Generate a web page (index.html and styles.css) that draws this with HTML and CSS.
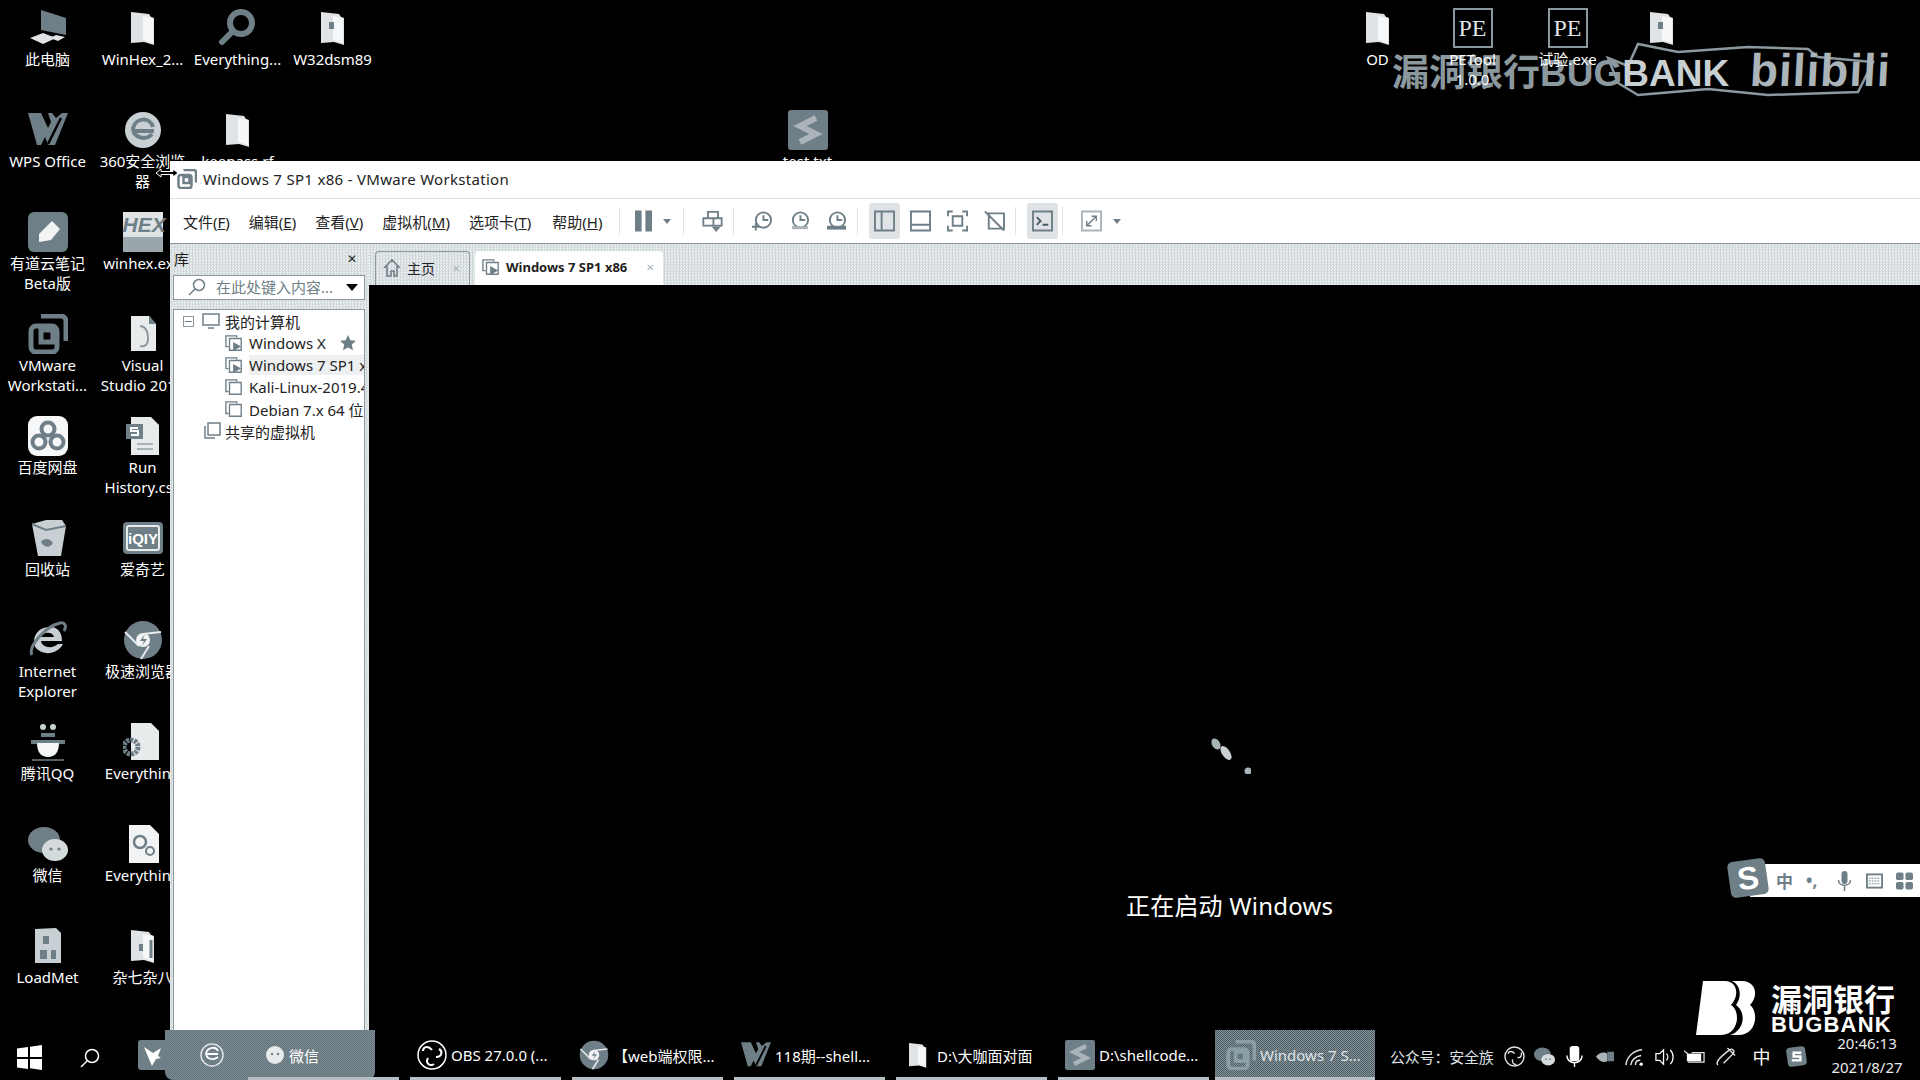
FILE: index.html
```html
<!DOCTYPE html>
<html lang="zh-CN">
<head>
    <meta charset="UTF-8">
    <title>Windows 7 SP1 x86 - VMware Workstation</title>
    <link rel="stylesheet" href="styles.css">
</head>
<body>
<svg class="defs" width="0" height="0">
    <defs>
        <symbol id="i-pc" viewBox="0 0 40 40"><path d="M13 2l25 8v17l-25-5z" fill="#6f7f87"/><path d="M2 30l13-5 13 5-13 6z" fill="#dfe3e5"/><path d="M28 27l9 2-7 4-8-3z" fill="#dfe3e5"/></symbol>
        <symbol id="i-folder" viewBox="0 0 40 40"><path d="M8 4l18 2 2 3 3 1v27l-10-3-13 1z" fill="#dfe3e5"/><path d="M20 8l10 2v25l-10-3z" fill="#f6f7f8"/></symbol>
        <symbol id="i-file" viewBox="0 0 40 40"><path d="M8 2h18l7 8v27H8z" fill="#e8ebec"/><path d="M26 2v8h7z" fill="#6f7f87"/><path d="M17 12c5 0 8 5 8 12s-3 9-8 8" fill="none" stroke="#8b989e" stroke-width="2"/></symbol>
        <symbol id="i-folder-dot" viewBox="0 0 40 40"><use href="#i-folder"/><rect x="16" y="14" width="5" height="7" fill="#6f7f87"/></symbol>
        <symbol id="i-search" viewBox="0 0 40 40"><circle cx="23" cy="15" r="11" fill="none" stroke="#6f7f87" stroke-width="6"/><path d="M14 24L4 34" stroke="#6f7f87" stroke-width="6" stroke-linecap="round"/></symbol>
        <symbol id="i-wps" viewBox="0 0 40 40"><path d="M0 3h13l7 15 3-6-3-9h4l4 5 6-5h6L27 35h-7l-3-8-4 8H9z" fill="#6f7f87"/><path d="M20 34L33 8" stroke="#000" stroke-width="2.500"/></symbol>
        <symbol id="i-360" viewBox="0 0 40 40"><circle cx="20" cy="20" r="18" fill="#c9d0d3"/><path d="M9 21h22M30 17c-3-10-17-10-20 1 0 10 13 13 19 6" stroke="#6f7f87" stroke-width="4" fill="none"/></symbol>
        <symbol id="i-note" viewBox="0 0 40 40"><rect width="40" height="40" rx="6" fill="#6f7f87"/><path d="M11 22L24 9l8 8-9 11-12 2z" fill="#f2f3f4"/></symbol>
        <symbol id="i-vmware" viewBox="0 0 40 40"><path d="M13 2h20a5 5 0 0 1 5 5v20" fill="none" stroke="#6f7f87" stroke-width="5"/><rect x="3" y="12" width="26" height="26" rx="5" fill="none" stroke="#6f7f87" stroke-width="5"/><rect x="13" y="16" width="12" height="12" fill="none" stroke="#6f7f87" stroke-width="5"/></symbol>
        <symbol id="i-sdoc" viewBox="0 0 40 40"><path d="M8 1h20l8 8v30H8z" fill="#e8ebec"/><rect x="3" y="8" width="17" height="15" fill="#6f7f87"/><path d="M15 12H8v3h7v4H8" stroke="#fff" stroke-width="2" fill="none"/><path d="M14 28h16M14 33h16" stroke="#a9b4b9" stroke-width="2"/></symbol>
        <symbol id="i-baidu" viewBox="0 0 40 40"><rect width="40" height="40" rx="9" fill="#f6f7f8"/><circle cx="20" cy="13" r="6.500" fill="none" stroke="#6f7f87" stroke-width="4"/><circle cx="11" cy="26" r="6.500" fill="none" stroke="#6f7f87" stroke-width="4"/><circle cx="29" cy="26" r="6.500" fill="none" stroke="#6f7f87" stroke-width="4"/></symbol>
        <symbol id="i-bin" viewBox="0 0 40 40"><path d="M4 6l14-4 16 0 4 6-5 30H10z" fill="#c9d0d3"/><path d="M4 6l14 6 20-4" fill="none" stroke="#6f7f87" stroke-width="2"/><path d="M13 24c4-5 9-3 12 1-3 5-9 5-12-1z" fill="#6f7f87"/></symbol>
        <symbol id="i-iqiyi" viewBox="0 0 40 40"><rect width="40" height="32" y="4" rx="4" fill="#6f7f87"/><rect x="4" y="8" width="32" height="24" rx="2" fill="none" stroke="#e8ebec" stroke-width="2"/><text x="20" y="26" text-anchor="middle" font-family="Liberation Sans" font-size="15" font-weight="700" fill="#fff">iQIY</text></symbol>
        <symbol id="i-ie" viewBox="0 0 40 40"><path d="M6 22c0-10 8-16 18-15 7 1 10 7 10 14H13c1 7 12 8 17 3h5c-4 8-14 11-21 8-5-2-8-5-8-10zm7-5h13c-1-5-11-6-13 0z" fill="#c9d0d3" fill-rule="evenodd"/><path d="M4 35c-4-8 12-28 28-32 5-1 7 3 4 8" fill="none" stroke="#6f7f87" stroke-width="3"/></symbol>
        <symbol id="i-chrome" viewBox="0 0 40 40"><circle cx="20" cy="20" r="19" fill="#6f7f87"/><path d="M2 12l14 14M20 14l18-2M26 26l-8 13" stroke="#e8ebec" stroke-width="2"/><circle cx="20" cy="20" r="7" fill="#f2f3f4"/><path d="M22 14l-5 7h4l-2 5 5-7h-4z" fill="#6f7f87"/></symbol>
        <symbol id="i-qq" viewBox="0 0 40 40"><circle cx="15" cy="5" r="3" fill="#c9d0d3"/><circle cx="25" cy="5" r="3" fill="#c9d0d3"/><path d="M13 13h14M3 20h34" stroke="#6f7f87" stroke-width="4"/><path d="M9 21h22c0 9-4 14-11 14S9 30 9 21z" fill="#f6f7f8"/><path d="M4 38h32" stroke="#6f7f87" stroke-width="1.500"/></symbol>
        <symbol id="i-gearfile" viewBox="0 0 40 40"><path d="M8 1h20l8 8v29H8z" fill="#e8ebec"/><circle cx="8" cy="25" r="7" fill="none" stroke="#6f7f87" stroke-width="5" stroke-dasharray="3 1"/></symbol>
        <symbol id="i-gearfile2" viewBox="0 0 40 40"><path d="M6 1h21l9 9v29H6z" fill="#f2f3f4"/><circle cx="17" cy="18" r="6" fill="none" stroke="#6f7f87" stroke-width="2.500"/><circle cx="27" cy="27" r="4" fill="none" stroke="#6f7f87" stroke-width="2"/></symbol>
        <symbol id="i-wechat" viewBox="0 0 40 40"><ellipse cx="16" cy="16" rx="16" ry="13" fill="#6f7f87"/><ellipse cx="27" cy="26" rx="13" ry="11" fill="#d5dadd"/><circle cx="23" cy="25" r="1.600" fill="#6f7f87"/><circle cx="31" cy="25" r="1.600" fill="#6f7f87"/></symbol>
        <symbol id="i-load" viewBox="0 0 40 40"><path d="M7 3l21-1 5 5v30H7z" fill="#c9d0d3"/><path d="M15 10h6v8h-6zM12 24h7v9h-7zM23 24h5v9h-5z" fill="#6f7f87"/></symbol>
        <symbol id="i-folder-bar" viewBox="0 0 40 40"><use href="#i-folder"/><path d="M28 14v18" stroke="#6f7f87" stroke-width="3"/><rect x="16" y="18" width="4" height="7" fill="#6f7f87"/></symbol>
        <symbol id="i-sublime" viewBox="0 0 40 40"><rect width="40" height="40" rx="3" fill="#6f7f87"/><path d="M28 8L12 16l16 8-16 8" fill="none" stroke="#aab4b9" stroke-width="6"/></symbol>
        <symbol id="i-vm-on" viewBox="0 0 20 20"><path d="M4 14H1V2h12v2" fill="none" stroke="#6f7f87" stroke-width="1.500"/><path d="M5 5h13v13H5z" fill="none" stroke="#6f7f87" stroke-width="1.500"/><path d="M9 9l9 5-9 5z" fill="#6f7f87"/></symbol>
        <symbol id="i-vm-off" viewBox="0 0 20 20"><path d="M4 15H1V2h12v2" fill="none" stroke="#6f7f87" stroke-width="1.500"/><path d="M5 5h13v13H5z" fill="none" stroke="#6f7f87" stroke-width="1.500"/></symbol>
        <symbol id="i-clock" viewBox="0 0 22 22"><circle cx="12" cy="10" r="8" fill="none" stroke="#6f7f87" stroke-width="2"/><path d="M12 5v5h5" fill="none" stroke="#6f7f87" stroke-width="2"/></symbol>
    </defs>
</svg>

<div class="mark-top">
    <svg class="mark-frame" viewBox="0 0 285 65"><path d="M5 20l20 8 10-22 40 8 70-5 60 2 10 8 55 5-15 30-90 3-60-6-70 6-20-12z" fill="none" stroke="#8b989e" stroke-width="2.500"/></svg>
    <span class="mark-name">漏洞银行BUG<em>BANK</em></span>
    <span class="mark-bili">bilibili</span>
</div>

<div class="desktop">
    <div class="desk-item c1"><svg class="desk-icon"><use href="#i-pc"/></svg><span>此电脑</span></div>
    <div class="desk-item c1"><svg class="desk-icon"><use href="#i-wps"/></svg><span>WPS Office</span></div>
    <div class="desk-item c1"><svg class="desk-icon"><use href="#i-note"/></svg><span>有道云笔记 Beta版</span></div>
    <div class="desk-item c1"><svg class="desk-icon"><use href="#i-vmware"/></svg><span>VMware Workstati...</span></div>
    <div class="desk-item c1"><svg class="desk-icon"><use href="#i-baidu"/></svg><span>百度网盘</span></div>
    <div class="desk-item c1"><svg class="desk-icon"><use href="#i-bin"/></svg><span>回收站</span></div>
    <div class="desk-item c1"><svg class="desk-icon"><use href="#i-ie"/></svg><span>Internet Explorer</span></div>
    <div class="desk-item c1"><svg class="desk-icon"><use href="#i-qq"/></svg><span>腾讯QQ</span></div>
    <div class="desk-item c1"><svg class="desk-icon"><use href="#i-wechat"/></svg><span>微信</span></div>
    <div class="desk-item c1"><svg class="desk-icon"><use href="#i-load"/></svg><span>LoadMet</span></div>

    <div class="desk-item c2"><svg class="desk-icon"><use href="#i-folder"/></svg><span>WinHex_2...</span></div>
    <div class="desk-item c2"><svg class="desk-icon"><use href="#i-360"/></svg><span>360安全浏览器</span></div>
    <div class="desk-item c2"><div class="hex-icon">HEX</div><span>winhex.exe</span></div>
    <div class="desk-item c2"><svg class="desk-icon"><use href="#i-file"/></svg><span>Visual<br>Studio 2019</span></div>
    <div class="desk-item c2"><svg class="desk-icon"><use href="#i-sdoc"/></svg><span>Run History.csv</span></div>
    <div class="desk-item c2"><svg class="desk-icon"><use href="#i-iqiyi"/></svg><span>爱奇艺</span></div>
    <div class="desk-item c2"><svg class="desk-icon"><use href="#i-chrome"/></svg><span>极速浏览器</span></div>
    <div class="desk-item c2"><svg class="desk-icon"><use href="#i-gearfile"/></svg><span>Everything</span></div>
    <div class="desk-item c2"><svg class="desk-icon"><use href="#i-gearfile2"/></svg><span>Everything</span></div>
    <div class="desk-item c2"><svg class="desk-icon"><use href="#i-folder-bar"/></svg><span>杂七杂八</span></div>

    <div class="desk-item c3"><svg class="desk-icon"><use href="#i-search"/></svg><span>Everything...</span></div>
    <div class="desk-item c3"><svg class="desk-icon"><use href="#i-folder"/></svg><span>keepass.rf</span></div>
    <div class="desk-item c4"><svg class="desk-icon"><use href="#i-folder-dot"/></svg><span>W32dsm89</span></div>
    <div class="desk-item c9"><svg class="desk-icon"><use href="#i-sublime"/></svg><span>test.txt</span></div>
    <div class="desk-item c15"><svg class="desk-icon"><use href="#i-folder"/></svg><span>OD</span></div>
    <div class="desk-item c16"><div class="pe-icon">PE</div><span>PETool<br>1.0.0</span></div>
    <div class="desk-item c17"><div class="pe-icon">PE</div><span>试验.exe</span></div>
    <div class="desk-item c18"><svg class="desk-icon"><use href="#i-folder-dot"/></svg></div>
</div>

<div class="window">
    <div class="titlebar">
        <svg class="title-icon"><use href="#i-vmware"/></svg>
        <span>Windows 7 SP1 x86 - VMware Workstation</span>
    </div>
    <div class="menubar">
        <nav class="menu">
            <span>文件(<u>F</u>)</span>
            <span>编辑(<u>E</u>)</span>
            <span>查看(<u>V</u>)</span>
            <span>虚拟机(<u>M</u>)</span>
            <span>选项卡(<u>T</u>)</span>
            <span>帮助(<u>H</u>)</span>
        </nav>
        <div class="toolbar">
            <i class="sep"></i>
            <svg class="tool tool-pause" viewBox="0 0 18 22"><path d="M0 0h7v22H0zM11 0h7v22h-7z" fill="#6f7f87"/></svg>
            <i class="caret"></i>
            <i class="sep"></i>
            <svg class="tool" viewBox="0 0 22 24"><path d="M6 2h11v7H6zM1 9h20v8H1zM12 9v8" fill="none" stroke="#6f7f87" stroke-width="2"/><path d="M10 18h10l-5 6z" fill="#6f7f87"/></svg>
            <i class="sep"></i>
            <svg class="tool" viewBox="0 0 22 22"><use href="#i-clock"/><path d="M4 13v8M0 17h8" stroke="#6f7f87" stroke-width="2"/></svg>
            <svg class="tool" viewBox="0 0 22 22"><use href="#i-clock"/><path d="M3 18h17" stroke="#aab4b9" stroke-width="3"/></svg>
            <svg class="tool" viewBox="0 0 22 22"><use href="#i-clock"/><path d="M1 18h20" stroke="#6f7f87" stroke-width="4"/></svg>
            <i class="sep"></i>
            <span class="tool-on"><svg class="tool" viewBox="0 0 22 22"><path d="M1 1h20v20H1zM8 1v20" fill="none" stroke="#6f7f87" stroke-width="2"/></svg></span>
            <svg class="tool" viewBox="0 0 22 22"><path d="M1 1h20v20H1zM1 15h20" fill="none" stroke="#6f7f87" stroke-width="2"/></svg>
            <svg class="tool" viewBox="0 0 22 22"><path d="M1 6V1h5M16 1h5v5M21 16v5h-5M6 21H1v-5M6 6h10v10H6z" fill="none" stroke="#6f7f87" stroke-width="2"/></svg>
            <svg class="tool" viewBox="0 0 22 22"><path d="M5 3h16v16H5zM1 1l20 20" fill="none" stroke="#6f7f87" stroke-width="2"/></svg>
            <i class="sep"></i>
            <span class="tool-on"><svg class="tool" viewBox="0 0 22 22"><path d="M1 1h20v20H1z" fill="none" stroke="#6f7f87" stroke-width="2"/><path d="M5 7l4 4-4 4M11 15h6" fill="none" stroke="#4b5a62" stroke-width="2"/></svg></span>
            <i class="sep"></i>
            <svg class="tool" viewBox="0 0 22 22"><path d="M1 1h20v20H1z" fill="none" stroke="#aab4b9" stroke-width="2"/><path d="M6 16L16 6M11 6h5v5M6 11v5h5" fill="none" stroke="#6f7f87" stroke-width="1.500"/></svg>
            <i class="caret"></i>
        </div>
    </div>
    <div class="workspace">
        <aside class="library">
            <div class="library-head"><span>库</span><span class="library-close">✕</span></div>
            <div class="library-search">
                <svg class="search-glass" viewBox="0 0 18 18"><circle cx="11" cy="7" r="5.500" fill="none" stroke="#6f7f87" stroke-width="1.500"/><path d="M7 11l-6 6" stroke="#6f7f87" stroke-width="1.500"/></svg>
                <span class="search-text">在此处键入内容...</span>
                <i class="search-caret"></i>
            </div>
            <div class="tree">
                <div class="tree-row root">
                    <i class="tree-toggle"></i>
                    <svg class="tree-icon" viewBox="0 0 18 18"><path d="M1 2h16v11H1zM6 16h6" fill="none" stroke="#6f7f87" stroke-width="1.500"/></svg>
                    <span>我的计算机</span>
                </div>
                <div class="tree-row vm"><svg class="tree-icon"><use href="#i-vm-on"/></svg><span>Windows X</span><svg class="tree-star" viewBox="0 0 16 16"><path d="M8 0l2.400 5.200 5.600.6-4.200 3.800 1.200 5.600L8 12.400l-5 2.800 1.200-5.600L0 5.800l5.600-.6z" fill="#6f7f87"/></svg></div>
                <div class="tree-row vm current"><svg class="tree-icon"><use href="#i-vm-on"/></svg><span>Windows 7 SP1 x86</span></div>
                <div class="tree-row vm"><svg class="tree-icon"><use href="#i-vm-off"/></svg><span>Kali-Linux-2019.4</span></div>
                <div class="tree-row vm"><svg class="tree-icon"><use href="#i-vm-off"/></svg><span>Debian 7.x 64 位</span></div>
                <div class="tree-row shared">
                    <svg class="tree-icon" viewBox="0 0 18 18"><path d="M4 1h12v12H4zM1 4v12h10" fill="none" stroke="#6f7f87" stroke-width="1.500"/></svg>
                    <span>共享的虚拟机</span>
                </div>
            </div>
        </aside>
        <main class="main">
            <div class="tabs">
                <div class="tab tab-home">
                    <svg class="tab-icon" viewBox="0 0 18 18"><path d="M1 9l8-8 8 8M4 7v10h4v-5h3v5h3V7" fill="none" stroke="#6f7f87" stroke-width="1.600"/></svg>
                    <span>主页</span><span class="tab-close">✕</span>
                </div>
                <div class="tab tab-active">
                    <svg class="tab-icon"><use href="#i-vm-on"/></svg>
                    <span>Windows 7 SP1 x86</span><span class="tab-close">✕</span>
                </div>
            </div>
            <div class="screen">
                <svg class="spinner" viewBox="0 0 40 36"><ellipse cx="5" cy="6" rx="4" ry="6" transform="rotate(-30 5 6)" fill="#a9b4b9"/><ellipse cx="15" cy="15" rx="4" ry="8" transform="rotate(-35 15 15)" fill="#c9d0d3"/><circle cx="37" cy="33" r="3.500" fill="#a9b4b9"/></svg>
                <div class="boot-text">正在启动 Windows</div>
            </div>
        </main>
    </div>
</div>

<svg class="resize-cursor" viewBox="0 0 24 10"><path d="M1 5l5-4v2.500h12V1l5 4-5 4V6.500H6V9z" fill="#000" stroke="#fff"/></svg>

<div class="ime">
    <span class="ime-logo">S</span>
    <span>中</span><span class="ime-comma">•,</span>
    <svg class="ime-icon" viewBox="0 0 14 20"><rect x="4" width="6" height="13" rx="3" fill="#6f7f87"/><path d="M1 9c0 7 12 7 12 0M7 15v5" fill="none" stroke="#6f7f87" stroke-width="1.500"/></svg>
    <svg class="ime-icon" viewBox="0 0 18 18"><rect x="1" y="2" width="16" height="14" fill="none" stroke="#6f7f87" stroke-width="2"/><path d="M3 6h12M3 9h12M3 12h12" stroke="#6f7f87" stroke-dasharray="2 1"/></svg>
    <svg class="ime-icon" viewBox="0 0 18 18"><rect width="8" height="8" rx="2" fill="#6f7f87"/><rect x="10" width="8" height="8" rx="2" fill="#6f7f87"/><rect y="10" width="8" height="8" rx="2" fill="#6f7f87"/><rect x="10" y="10" width="8" height="8" rx="2" fill="#6f7f87"/></svg>
</div>

<div class="taskbar">
    <span class="hover-glow"></span>
    <div class="task-cell"><svg class="win-logo" viewBox="0 0 25 25"><path d="M0 3.500L11 2v10H0zM13 1.700L25 0v12H13zM0 14h11v10L0 22.500zM13 14h12v11l-12-1.700z" fill="#fff"/></svg></div>
    <div class="task-cell"><svg class="task-glass" viewBox="0 0 20 20"><circle cx="12" cy="8" r="6.500" fill="none" stroke="#fff" stroke-width="1.500"/><path d="M7 13l-6 6" stroke="#fff" stroke-width="1.500"/></svg></div>
    <div class="task-pin"><svg viewBox="0 0 30 30"><rect width="30" height="30" rx="3" fill="#6f7f87"/><path d="M6 7l9 6 8-5-3 8 3 2-5 1-4 7-3-7z" fill="#fff"/></svg></div>
    <div class="task-pin2"><svg viewBox="0 0 26 26"><circle cx="13" cy="13" r="11" fill="none" stroke="#dfe3e5" stroke-width="1.500"/><path d="M7 12h12M19 9c-2-5-10-4-12 2 0 6 7 8 12 4" fill="none" stroke="#fff" stroke-width="1.800"/></svg></div>
    <div class="task task-first"><svg class="task-icon small" viewBox="0 0 20 20"><circle cx="10" cy="10" r="9" fill="#e8ebec"/><circle cx="7" cy="9" r="1.200" fill="#6f7f87"/><circle cx="13" cy="9" r="1.200" fill="#6f7f87"/></svg><span>微信</span></div>
    <div class="task"><svg class="task-icon" viewBox="0 0 30 30"><circle cx="15" cy="15" r="14" fill="none" stroke="#fff" stroke-width="1.500"/><path d="M15 10c-4-5-9-3-9 1M11 18c-3 5 2 9 6 6M19 17c6 0 7-6 3-8" fill="none" stroke="#fff" stroke-width="2"/></svg><span>OBS 27.0.0 (...</span></div>
    <div class="task"><svg class="task-icon" viewBox="0 0 30 30"><use href="#i-chrome"/></svg><span>【web端权限...</span></div>
    <div class="task"><svg class="task-icon" viewBox="0 0 30 30"><use href="#i-wps"/></svg><span>118期--shell...</span></div>
    <div class="task"><svg class="task-icon" viewBox="0 0 30 30"><use href="#i-folder"/></svg><span>D:\大咖面对面</span></div>
    <div class="task"><svg class="task-icon" viewBox="0 0 30 30"><use href="#i-sublime"/></svg><span>D:\shellcode...</span></div>
    <div class="task task-current"><svg class="task-icon" viewBox="0 0 30 30"><use href="#i-vmware"/></svg><span>Windows 7 S...</span></div>
    <div class="tray">
        <span class="tray-label">公众号：安全族</span>
        <span class="tray-cell"><svg viewBox="0 0 22 22"><circle cx="11" cy="11" r="10" fill="none" stroke="#dfe3e5" stroke-width="1.500"/><path d="M11 8c-3-4-6-2-7 0M9 14c-1 4 2 6 4 5M14 12c4 1 5-3 4-5" fill="none" stroke="#dfe3e5" stroke-width="1.500"/></svg></span>
        <span class="tray-cell"><svg viewBox="0 0 22 22"><use href="#i-wechat"/></svg></span>
        <span class="tray-cell"><svg viewBox="0 0 22 22"><rect x="6" width="10" height="16" rx="3" fill="#fff"/><path d="M3 10c0 10 16 10 16 0M11 18v4" fill="none" stroke="#fff" stroke-width="1.500"/></svg></span>
        <span class="tray-cell"><svg viewBox="0 0 22 22"><path d="M2 11c4-5 9-5 12-3v8c-4 2-9 0-12-5z" fill="#a9b4b9"/><rect x="14" y="6" width="7" height="10" fill="#6f7f87"/></svg></span>
        <span class="tray-cell"><svg viewBox="0 0 22 22"><path d="M2 20C3 11 10 5 19 4M7 20c1-5 5-9 11-10M12 20c0-3 2-5 5-5" fill="none" stroke="#dfe3e5" stroke-width="1.500"/><circle cx="18" cy="19" r="1.800" fill="#fff"/></svg></span>
        <span class="tray-cell"><svg viewBox="0 0 22 22"><path d="M2 8h4l4-4v15l-4-4H2z" fill="none" stroke="#fff" stroke-width="1.300"/><path d="M13 8c2 2 2 5 0 7M17 4c4 4 4 11 0 15" fill="none" stroke="#fff" stroke-width="1.300"/></svg></span>
        <span class="tray-cell"><svg viewBox="0 0 22 22"><path d="M0 5l4 3M8 7h13v10H4" fill="none" stroke="#dfe3e5" stroke-width="1.300"/><rect x="3" y="8" width="15" height="8" fill="#fff"/></svg></span>
        <span class="tray-cell wide"><svg viewBox="0 0 22 22"><path d="M2 20c-3-3 2-8 12-16 3-2 6 1 4 4L8 18M12 2l8 8" fill="none" stroke="#dfe3e5" stroke-width="1.500"/></svg></span>
        <span class="tray-cell wide tray-lang">中</span>
        <span class="tray-cell wide"><svg viewBox="0 0 22 22"><rect x="1" y="1" width="20" height="20" rx="4" transform="rotate(-8 11 11)" fill="#6f7f87"/><path d="M16 7H8v4h7v4H6" fill="none" stroke="#fff" stroke-width="2.500"/></svg></span>
        <div class="clock"><span>20:46:13</span><span>2021/8/27</span></div>
    </div>
</div>

<div class="mark-corner">
    <svg class="mark-b" viewBox="0 0 62 54"><path d="M7 0h22c12 0 15 14 6 24 10 6 8 30-10 30H0z" fill="#fff"/><path d="M36 0h10c14 0 17 15 8 24 9 7 7 30-12 30h-8c14-4 17-22 6-30 6-8 5-20-4-24z" fill="#fff"/></svg>
    <div class="mark-text"><strong>漏洞银行</strong><b>BUGBANK</b></div>
</div>
</body>
</html>
```

FILE: styles.css
```css
* { box-sizing: border-box; }
html, body { margin: 0; height: 100%; }
body {
    position: relative;
    width: 1920px;
    height: 1080px;
    overflow: hidden;
    background: #000;
    color: #fff;
    font-family: "Noto Sans", "Noto Sans CJK SC", sans-serif;
    font-size: 14px;
}
.defs { position: absolute; }

/* desktop */
.desktop {
    position: relative;
    display: grid;
    grid-template-columns: repeat(20, 95px);
    grid-template-rows: repeat(10, 102px);
    grid-auto-flow: column;
    padding-top: 8px;
}
.desk-item {
    display: flex;
    flex-direction: column;
    align-items: center;
    text-align: center;
    font-size: 15px;
    line-height: 20px;
    padding: 0 1px;
}
.desk-item span { margin-top: 1px; }
.desk-icon, .hex-icon, .pe-icon { width: 40px; height: 40px; flex: none; }
.c1 { grid-column: 1; }
.c2 { grid-column: 2; }
.c3 { grid-column: 3; }
.c4 { grid-column: 4; }
.c9 { grid-column: 9; grid-row: 2; }
.c15 { grid-column: 15; }
.c16 { grid-column: 16; }
.c17 { grid-column: 17; }
.c18 { grid-column: 18; margin-left: -2px; }
.hex-icon {
    background: linear-gradient(#dfe3e5 0 62%, #9aa6ab 62%);
    color: #6f7f87;
    font: italic bold 21px/26px "Liberation Sans", sans-serif;
    text-align: center;
}
.pe-icon {
    border: 2px solid #8b989e;
    color: #dfe3e5;
    font: 24px/36px "Liberation Serif", serif;
}

/* window */
.window {
    position: absolute;
    left: 170px;
    top: 161px;
    right: 0;
    bottom: 50px;
    display: flex;
    flex-direction: column;
    background: #fff;
    color: #222;
}
.titlebar {
    display: flex;
    align-items: center;
    gap: 6px;
    height: 38px;
    padding: 0 0 2px 7px;
    border-bottom: 1px solid #dfe3e5;
    font-size: 15px;
    letter-spacing: 0.3px;
    flex: none;
}
.title-icon { width: 20px; height: 20px; }
.menubar {
    display: flex;
    align-items: center;
    height: 45px;
    flex: none;
    border-bottom: 1px solid #8b989e;
}
.menu { display: flex; gap: 19px; padding-left: 13px; font-size: 15px; width: 448px; flex: none; }
.menu span:last-child { margin-left: 2px; }
.toolbar { display: flex; align-items: center; margin-left: -1px; }
.sep { width: 1px; height: 28px; margin: 0 2px; background: #dfe3e5; }
.tool { width: 21px; height: 22px; margin: 0 8px; flex: none; }
.tool-pause { margin: 0 8px 0 13px; width: 17px; }
.caret {
    width: 0;
    height: 0;
    margin: 0 10px 0 3px;
    border: 4px solid transparent;
    border-top: 5px solid #6f7f87;
    border-bottom: 0;
}
.tool-on {
    display: flex;
    align-items: center;
    height: 36px;
    margin: 0 2px 0 9px;
    background: #dfe3e5;
    border-radius: 3px;
}
.tool-on .tool { margin: 0 5px; }
.toolbar > .sep + .tool { margin-left: 16px; }
.toolbar > .sep + .tool-pause { margin-left: 13px; }
.workspace {
    flex: 1;
    display: flex;
    min-height: 0;
}

/* dotted grey of the panels */
.library, .tabs {
    background: repeating-conic-gradient(#cfd6d9 0 25%, #eceff0 0 50%) 0 0 / 3px 3px;
}
.library { width: 199px; padding: 0 4px 0 3px; flex: none; display: flex; flex-direction: column; }
.library-head {
    display: flex;
    justify-content: space-between;
    align-items: center;
    height: 31px;
    padding: 0 8px 3px 1px;
    font-size: 15px;
}
.library-close { font-size: 12px; }
.library-search {
    display: flex;
    align-items: center;
    height: 25px;
    background: #fff;
    border: 1px solid #8b989e;
    padding: 0 0 1px 14px;
}
.search-glass { width: 18px; height: 18px; }
.search-text { margin-left: 10px; font-size: 15px; line-height: 20px; color: #6f7f87; flex: 1; white-space: nowrap; }
.search-caret {
    width: 0;
    height: 0;
    margin-right: 6px;
    border: 6px solid transparent;
    border-top: 7px solid #000;
    border-bottom: 0;
}
.tree {
    flex: 1;
    margin-top: 9px;
    background: #fff;
    border: 1px solid #8b989e;
    border-bottom: 0;
    overflow: hidden;
    font-size: 15px;
}
.tree-row {
    position: relative;
    display: flex;
    align-items: center;
    height: 22px;
    white-space: nowrap;
}
.tree-row.root { padding-left: 9px; }
.tree-toggle {
    width: 11px;
    height: 11px;
    border: 1px solid #8b989e;
    background: linear-gradient(#6f7f87, #6f7f87) center / 7px 1px no-repeat;
}
.tree-icon { width: 18px; height: 18px; flex: none; }
.root .tree-icon { margin: 0 5px 0 8px; }
.vm { padding-left: 51px; }
.vm .tree-icon { margin-right: 6px; }
.current span { background: #eef0f1; flex: 1; }
.shared { padding-left: 30px; }
.shared .tree-icon { margin-right: 3px; }
.tree-star { position: absolute; left: 166px; width: 16px; height: 16px; }

.main { flex: 1; display: flex; flex-direction: column; min-width: 0; }
.tabs {
    display: flex;
    align-items: flex-end;
    gap: 5px;
    height: 41px;
    padding-left: 6px;
    flex: none;
}
.tab {
    display: flex;
    align-items: center;
    height: 34px;
    padding-bottom: 2px;
    font-size: 13px;
    border-radius: 4px 4px 0 0;
    position: relative;
}
.tab-home { width: 95px; padding-left: 7px; gap: 6px; border: 1px solid #8b989e; border-bottom: 0; font-size: 14px; }
.tab-active { width: 188px; padding-left: 7px; gap: 6px; background: #fff; font-weight: 700; }
.tab-icon { width: 18px; height: 18px; flex: none; }
.tab-close { position: absolute; right: 9px; font-size: 10px; font-weight: 400; color: #aab4b9; }
.screen {
    flex: 1;
    position: relative;
    background: #000;
    color: #fff;
}
.spinner { position: absolute; left: 842px; top: 453px; width: 40px; height: 36px; }
.boot-text {
    position: absolute;
    left: 757px;
    top: 605px;
    font-size: 24px;
    line-height: 32px;
    letter-spacing: 0.2px;
    white-space: nowrap;
}
.resize-cursor { position: absolute; left: 155px; top: 168px; width: 24px; height: 10px; }

/* input method bar */
.ime {
    position: absolute;
    right: 0;
    top: 864px;
    width: 170px;
    height: 33px;
    padding-left: 26px;
    display: flex;
    align-items: center;
    gap: 13px;
    background: #fff;
    color: #6f7f87;
    font-weight: 700;
    font-size: 17px;
}
.ime-comma { width: 17px; }
.ime-logo {
    position: absolute;
    left: -21px;
    top: -4px;
    width: 38px;
    height: 36px;
    background: #6f7f87;
    border-radius: 5px;
    transform: rotate(-8deg);
    color: #fff;
    font: bold 32px/36px "Liberation Sans", sans-serif;
    text-align: center;
}
.ime-icon { width: 17px; height: 20px; flex: none; }

/* watermarks, painted under the desktop icons */
.mark-top { position: absolute; z-index: -1; left: 1392px; top: 38px; width: 500px; height: 70px; }
.mark-name {
    position: absolute;
    left: 0;
    top: 11px;
    color: #8b989e;
    font: 700 37px/50px "Liberation Sans", "Noto Sans CJK SC", sans-serif;
    white-space: nowrap;
}
.mark-name em { font-style: normal; color: #c9d0d3; }
.mark-frame { position: absolute; left: 211px; top: 0; width: 285px; height: 65px; }
.mark-bili {
    position: absolute;
    left: 358px;
    top: 4px;
    color: #aab4b9;
    font: 700 46px/56px "Liberation Sans", sans-serif;
    letter-spacing: 1px;
    transform: skewX(-3deg);
}
.mark-corner {
    position: absolute;
    left: 1696px;
    top: 981px;
    display: flex;
    gap: 13px;
}
.mark-b { width: 62px; height: 54px; }
.mark-text { display: flex; flex-direction: column; width: 125px; }
.mark-text strong { font: 700 31px/34px "Noto Sans CJK SC", sans-serif; white-space: nowrap; }
.mark-text b { font: 700 22px/20px "Liberation Sans", sans-serif; letter-spacing: 1.200px; white-space: nowrap; }

/* taskbar */
.taskbar {
    position: absolute;
    left: 0;
    right: 0;
    bottom: 0;
    height: 50px;
    display: flex;
    align-items: stretch;
    background: #000;
}
.hover-glow {
    position: absolute;
    left: 165px;
    top: 0;
    width: 210px;
    height: 50px;
    background: repeating-conic-gradient(#66767e 0 25%, #7a8990 0 50%) 0 0 / 2px 2px;
    border-radius: 0 0 8px 8px;
}
.task-cell { width: 60px; display: flex; align-items: center; justify-content: center; position: relative; }
.win-logo { width: 25px; height: 25px; margin-top: 5px; margin-left: -1px; }
.task-glass { width: 20px; height: 20px; margin-top: 5px; }
.task-pin { width: 45px; position: relative; padding-top: 10px; padding-left: 18px; }
.task-pin svg { width: 30px; height: 30px; display: block; }
.task-pin2 { width: 83px; position: relative; padding-top: 12px; padding-left: 34px; }
.task-pin2 svg { width: 26px; height: 26px; display: block; }
.task {
    position: relative;
    width: 151px;
    margin-right: 11px;
    padding: 3px 0 0 7px;
    display: flex;
    align-items: center;
    gap: 4px;
    font-size: 15px;
    white-space: nowrap;
    border-bottom: 3px solid #b6bfc3;
}
.task-icon { width: 30px; height: 30px; flex: none; }
.task-icon.small { width: 20px; height: 20px; margin-left: 10px; }
.task-current {
    width: 160px;
    margin: 0 0 0 -5px;
    padding-left: 11px;
    background: repeating-conic-gradient(#4e5c63 0 25%, #84929a 0 50%) 0 0 / 2px 2px;
    color: #dfe3e5;
}
.task-current .task-icon { filter: brightness(1.25); }
.tray {
    display: flex;
    align-items: center;
    margin-left: 15px;
    padding-top: 2px;
    position: relative;
}
.tray-label { width: 109px; font-size: 15px; letter-spacing: -0.2px; color: #dfe3e5; white-space: nowrap; }
.tray-cell { width: 30px; display: flex; justify-content: center; }
.tray-cell.wide { width: 35px; }
.tray-cell svg { width: 21px; height: 21px; }
.tray-lang { font-size: 18px; color: #fff; }
.clock {
    width: 106px;
    display: flex;
    flex-direction: column;
    align-items: center;
    gap: 4px;
    font-size: 15px;
    line-height: 20px;
    margin-top: -3px;
    color: #e8ebec;
}
```
